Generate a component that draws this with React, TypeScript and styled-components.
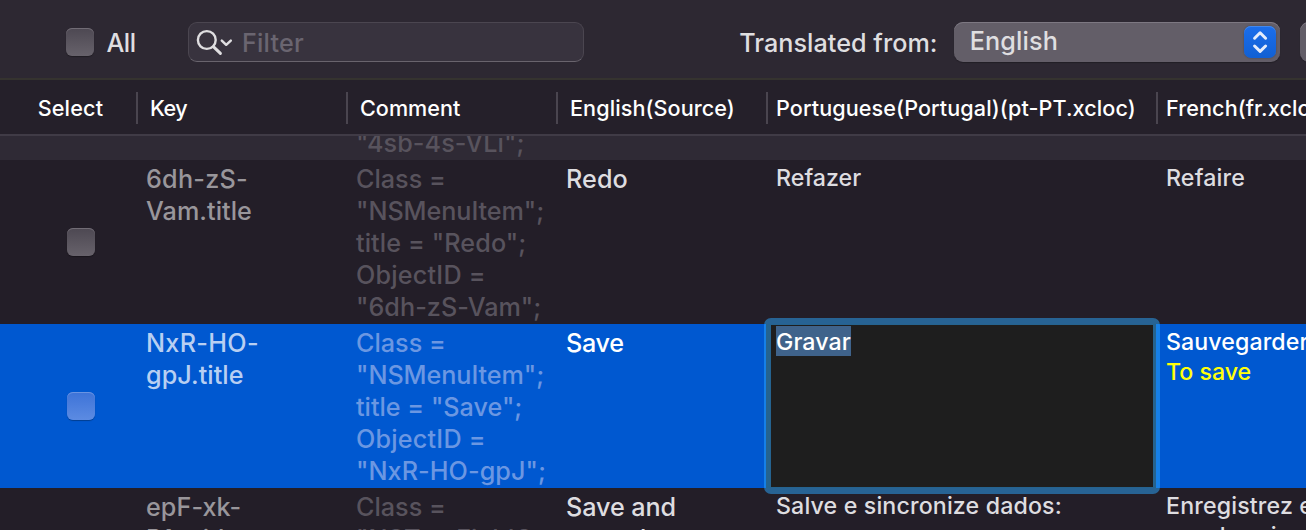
import React from "react";
import styled, { createGlobalStyle, css } from "styled-components";

const GlobalStyle = createGlobalStyle`
  * { box-sizing: border-box; }
  body {
    margin: 0;
    overflow: hidden;
    background: #231e28;
    font-family: Inter, "Liberation Sans", sans-serif;
    font-weight: 450;
  }
`;

const Window = styled.main`
  position: relative;
  display: flex;
  flex-direction: column;
  width: 1306px;
  height: 530px;
  overflow: hidden;
  background: #231e28;
`;

/* Toolbar */

const Toolbar = styled.header`
  display: flex;
  flex: none;
  align-items: flex-start;
  height: 80px;
  padding: 22px 0 0 66px;
  background: #2d2832;
  border-bottom: 2px solid #35332f;

  > * { flex: none; }
`;

const Label = styled.span<{ $track?: number }>`
  font-size: 25.2px;
  line-height: 40px;
  letter-spacing: ${(p) => p.$track ?? 0.2}px;
  white-space: nowrap;
  color: #dfdee0;
`;

const SelectAll = styled.label`
  display: flex;
  align-items: flex-start;
  gap: 12.4px;
  width: 122px;
  height: 40px;
  padding-top: 1px;
`;

const Checkbox = styled.span<{ $selected?: boolean }>`
  flex: none;
  width: 28px;
  height: 28px;
  border-radius: 6px;
  ${(p) =>
    p.$selected
      ? css`
          background: linear-gradient(#3d73d8, #5c8be2);
          box-shadow: inset 0 1px 0 #6a94e2, 0 1px 1px rgba(0, 0, 0, 0.3);
        `
      : css`
          background: linear-gradient(#4d4852, #67626b);
          box-shadow: inset 0 1px 0 #716c75, 0 1px 1px rgba(0, 0, 0, 0.3);
        `}
`;

const AllCheckbox = styled(Checkbox)`
  margin-top: 5px;
`;

const SearchField = styled.div`
  display: flex;
  align-items: flex-start;
  width: 396px;
  height: 40px;
  padding-left: 7px;
  border: 1px solid #4b4650;
  border-bottom-color: #69646d;
  border-radius: 9px;
  background: #38333e;
`;

const SearchIcon = styled.svg`
  flex: none;
  width: 46px;
  height: 38px;
`;

const Placeholder = styled(Label)`
  color: #6a6570;
`;

const SourceLabel = styled(Label)`
  width: 214.7px;
  margin-left: 155.3px;
  padding-top: 1px;
`;

const PopUpButton = styled.div`
  display: flex;
  align-items: flex-start;
  justify-content: space-between;
  width: 326px;
  height: 40px;
  margin-right: 20px;
  padding: 0 4px 0 15.7px;
  border-radius: 9px;
  background: #635e68;
  box-shadow: inset 0 1px 0 #7d7882, 0 1px 1px rgba(0, 0, 0, 0.25);
`;

const PopUpValue = styled(Label)`
  line-height: 38px;
`;

const Stepper = styled.span`
  display: flex;
  width: 32px;
  height: 32px;
  margin-top: 4px;
  border-radius: 7px;
  background: linear-gradient(#1b6eec, #1160d3);
  box-shadow: inset 0 1px 0 #4288ee, 0 0 2px rgba(0, 0, 0, 0.3);
`;

/* Table */

const columns = "136px 210px 210px 210px 390px 390px";

const TableHead = styled.div`
  display: grid;
  flex: none;
  grid-template-columns: ${columns};
  align-items: start;
  height: 56px;
  padding-top: 12px;
  background: #25202a;
  border-bottom: 2px solid #403b46;
`;

const HeadCell = styled.div<{ $pad: number; $first?: boolean; $track?: number }>`
  height: 32px;
  padding-left: ${(p) => p.$pad}px;
  border-left: ${(p) => (p.$first ? "0" : "2px solid #4a454f")};
  font-size: 21.6px;
  font-weight: 530;
  line-height: 32px;
  letter-spacing: ${(p) => p.$track ?? 0.08}px;
  white-space: nowrap;
  color: #fff;
`;

const TableBody = styled.div`
  display: flex;
  flex-direction: column;
`;

const Row = styled.div<{ $selected?: boolean }>`
  display: grid;
  flex: none;
  grid-template-columns: ${columns};
  height: 164px;
  color: ${(p) => (p.$selected ? "#fff" : "#dedde0")};
  background: ${(p) => (p.$selected ? "#0058d0" : "#231e28")};
`;

const ScrolledRow = styled(Row)`
  height: 24px;
  align-content: end;
  overflow: hidden;
  background: #2f2a35;
`;

const CheckCell = styled.div`
  display: flex;
  align-items: center;
  padding-left: 67px;
`;

const Cell = styled.div`
  padding: 3px 0 1px 10px;
  font-size: 25.2px;
  line-height: 32px;
  white-space: nowrap;
`;

const KeyCell = styled(Cell)<{ $selected?: boolean }>`
  color: ${(p) => (p.$selected ? "#b8cff2" : "#99969b")};
`;

const CommentCell = styled(Cell)<{ $selected?: boolean }>`
  color: ${(p) => (p.$selected ? "#6b97e2" : "#58535d")};
`;

const TranslationCell = styled(Cell)`
  position: relative;
  font-size: 23.2px;
  line-height: 30px;
`;

const EditorCell = styled(TranslationCell)`
  background: #1e1e1e;
`;

const FocusRing = styled.span`
  position: absolute;
  inset: -6px -4px -6px -2px;
  z-index: 1;
  border: 7px solid rgba(44, 168, 255, 0.5);
  border-radius: 7px;
`;

const Line = styled.div<{ $track?: number }>`
  letter-spacing: ${(p) => p.$track ?? 0.08}px;
`;

const Hint = styled(Line)`
  color: #ffff0a;
`;

const Highlight = styled.mark`
  padding: 2px 0.8px 0 0;
  color: #fff;
  background: #3f638b;
`;

const Watermark = styled.span<{ $x: number }>`
  position: absolute;
  left: ${(p) => p.$x}px;
  top: 298px;
  z-index: 2;
  font-size: 26px;
  font-style: italic;
  font-weight: 700;
  line-height: 26px;
  letter-spacing: 0.4px;
  white-space: nowrap;
  color: rgba(255, 255, 255, 0.018);
  transform: rotate(-46deg);
  transform-origin: 0 100%;
  pointer-events: none;
`;

type TextLine = [text: string, track?: number];

const lines = (items: TextLine[]) =>
  items.map(([text, track]) => (
    <Line key={text} $track={track}>
      {text}
    </Line>
  ));

export default function App() {
  return (
    <Window>
      <GlobalStyle />
      <Toolbar>
        <SelectAll>
          <AllCheckbox />
          <Label $track={-0.4}>All</Label>
        </SelectAll>
        <SearchField>
          <SearchIcon viewBox="196 23 46 38" fill="none" stroke="#dfdee0" strokeLinecap="round" strokeLinejoin="round">
            <circle cx="206.8" cy="40" r="8.9" strokeWidth="2.4" />
            <path d="M213.6 46.8L220.4 53.4" strokeWidth="3" />
            <path d="M221.8 40.6L226.2 44.8L230.8 40.6" strokeWidth="2.5" />
          </SearchIcon>
          <Placeholder $track={0.2}>Filter</Placeholder>
        </SearchField>
        <SourceLabel $track={0.03}>Translated from:</SourceLabel>
        <PopUpButton>
          <PopUpValue $track={0.15}>English</PopUpValue>
          <Stepper>
            <svg width="32" height="32" fill="none" stroke="#e4ecfb" strokeWidth="3" strokeLinecap="round" strokeLinejoin="round">
              <path d="M10.6 12.2L16.1 6.8L21.6 12.2" />
              <path d="M10.6 20L16.1 25.4L21.6 20" />
            </svg>
          </Stepper>
        </PopUpButton>
        <PopUpButton />
      </Toolbar>

      <TableHead>
        <HeadCell $first $pad={37.7} $track={0.15}>Select</HeadCell>
        <HeadCell $pad={12} $track={-0.5}>Key</HeadCell>
        <HeadCell $pad={12} $track={0.02}>Comment</HeadCell>
        <HeadCell $pad={12} $track={0.08}>English(Source)</HeadCell>
        <HeadCell $pad={8}>Portuguese(Portugal)(pt-PT.xcloc)</HeadCell>
        <HeadCell $pad={8}>French(fr.xcloc)</HeadCell>
      </TableHead>

      <TableBody>
        <ScrolledRow>
          <CheckCell />
          <Cell />
          <CommentCell>{lines([['"4sb-4s-VLi";', 0.08]])}</CommentCell>
        </ScrolledRow>

        <Row>
          <CheckCell><Checkbox /></CheckCell>
          <KeyCell>{lines([["6dh-zS-", 0.25], ["Vam.title", 0.05]])}</KeyCell>
          <CommentCell>
            {lines([["Class =", 0], ['"NSMenuItem";', -0.06], ['title = "Redo";', 0.1], ["ObjectID =", 0.2], ['"6dh-zS-Vam";', 0.03]])}
          </CommentCell>
          <Cell>{lines([["Redo"]])}</Cell>
          <TranslationCell>{lines([["Refazer", 0.03]])}</TranslationCell>
          <TranslationCell>{lines([["Refaire", 0.15]])}</TranslationCell>
        </Row>

        <Row $selected>
          <CheckCell><Checkbox $selected /></CheckCell>
          <KeyCell $selected>{lines([["NxR-HO-", 0.3], ["gpJ.title", 0.05]])}</KeyCell>
          <CommentCell $selected>
            {lines([["Class =", 0], ['"NSMenuItem";', -0.06], ['title = "Save";', 0], ["ObjectID =", 0.2], ['"NxR-HO-gpJ";', 0.06]])}
          </CommentCell>
          <Cell>{lines([["Save", -0.3]])}</Cell>
          <EditorCell>
            <Line $track={0.06}>
              <Highlight>Gravar</Highlight>
            </Line>
            <FocusRing />
          </EditorCell>
          <TranslationCell>
            <Line $track={0.08}>Sauvegarder</Line>
            <Hint $track={-0.03}>To save</Hint>
          </TranslationCell>
        </Row>

        <Row>
          <CheckCell><Checkbox /></CheckCell>
          <KeyCell>{lines([["epF-xk-", 0.06], ["P1s.title"]])}</KeyCell>
          <CommentCell>{lines([["Class =", 0], ['"NSTextFieldC']])}</CommentCell>
          <Cell>{lines([["Save and", -0.08], ["sync data:"]])}</Cell>
          <TranslationCell>{lines([["Salve e sincronize dados:", 0.14]])}</TranslationCell>
          <TranslationCell>{lines([["Enregistrez et", 0.15], ["synchronisez", 0.15]])}</TranslationCell>
        </Row>
      </TableBody>

      <Watermark $x={300}>9C:06:30:4E:A3:69</Watermark>
      <Watermark $x={870}>9C:06:30:4E:A3:69</Watermark>
    </Window>
  );
}
